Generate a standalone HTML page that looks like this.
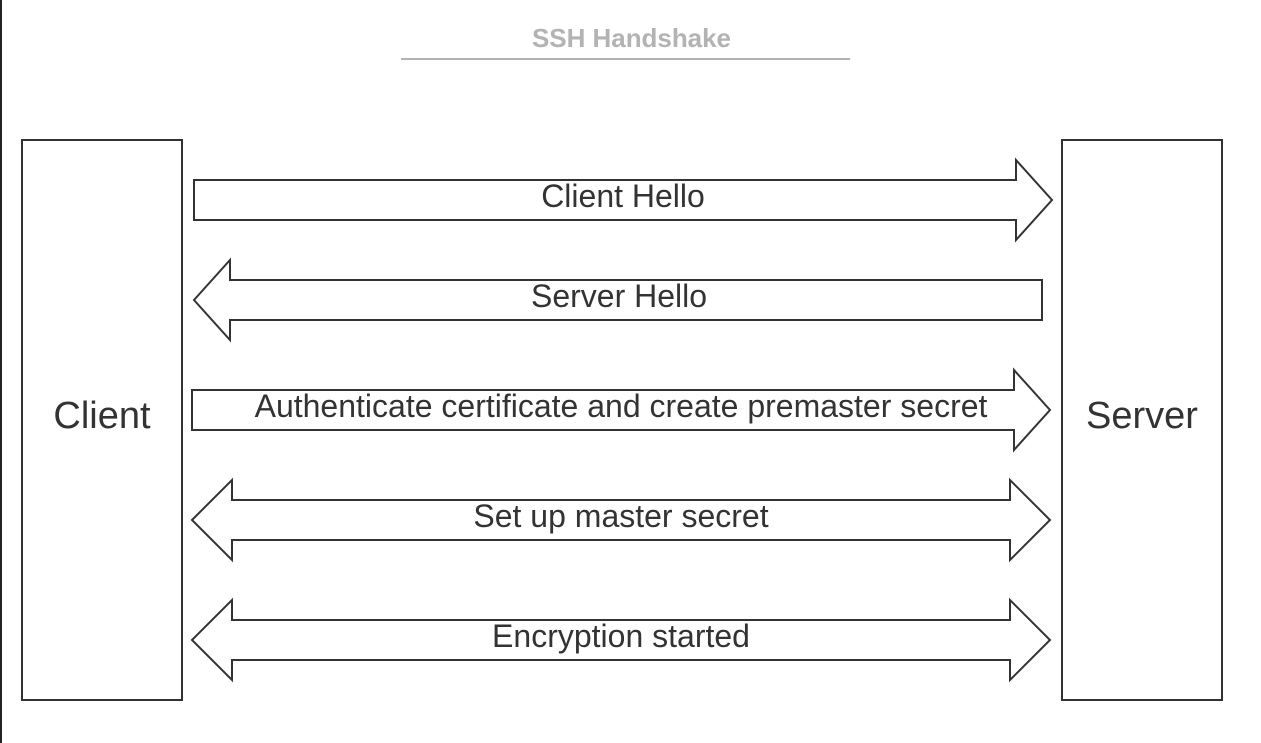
<!DOCTYPE html>
<html><head><style>html,body{margin:0;padding:0;background:#fff;}svg{display:block}</style></head>
<body>
<svg width="1261" height="743" viewBox="0 0 1261 743" xmlns="http://www.w3.org/2000/svg" font-family="Liberation Sans, Arial, sans-serif">
<rect width="1261" height="743" fill="#fff"/>
<line x1="1" y1="0" x2="1" y2="743" stroke="#222" stroke-width="2"/>
<text x="631.5" y="47" text-anchor="middle" font-size="26" font-weight="bold" fill="#b3b3b3" textLength="199">SSH Handshake</text>
<line x1="401" y1="59" x2="850" y2="59" stroke="#b3b3b3" stroke-width="2"/>
<g fill="#fff" stroke="#333" stroke-width="2">
<rect x="22" y="140" width="160" height="560"/>
<rect x="1062" y="140" width="160" height="560"/>
<polygon points="194,180 1016,180 1016,160 1052,200 1016,240 1016,220 194,220"/>
<polygon points="194,300 230,260 230,280 1042,280 1042,320 230,320 230,340"/>
<polygon points="192,390 1014,390 1014,370 1050,410 1014,450 1014,430 192,430"/>
<polygon points="192,520 232,480 232,500 1010,500 1010,480 1050,520 1010,560 1010,540 232,540 232,560"/>
<polygon points="192,640 232,600 232,620 1010,620 1010,600 1050,640 1010,680 1010,660 232,660 232,680"/>
</g>
<g fill="#333" text-anchor="middle">
<text x="102" y="428" font-size="38">Client</text>
<text x="1142" y="428" font-size="38">Server</text>
<text x="623" y="207" font-size="32">Client Hello</text>
<text x="619" y="307" font-size="32">Server Hello</text>
<text x="621" y="417" font-size="32">Authenticate certificate and create premaster secret</text>
<text x="621" y="527" font-size="32">Set up master secret</text>
<text x="621" y="647" font-size="32">Encryption started</text>
</g>
</svg>
</body></html>
